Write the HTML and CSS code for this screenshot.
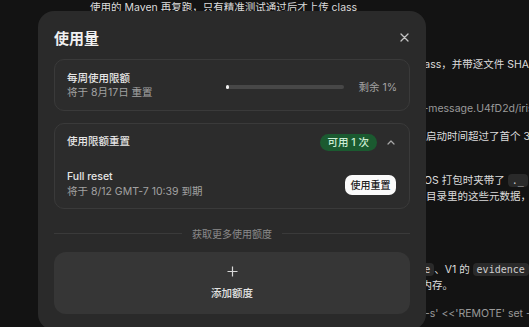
FILE: index.html
```html
<!DOCTYPE html>
<html lang="zh-CN">
<head>
    <meta charset="UTF-8">
    <meta name="viewport" content="width=device-width, initial-scale=1.0">
    <title>使用量</title>
    <link rel="stylesheet" href="styles.css">
</head>
<body>
    <div class="chat">
        <p>使用的 Maven 再复跑，只有精准测试通过后才上传 class</p>
        <p class="gap-l">只对本次改动涉及的 jar 重新编译并打包，精准测试全部通过后再上传 class，并带逐文件 SHA-256 校验</p>
        <p class="gap-m muted">把复跑时产生的全部测试结果和覆盖率数据统一归档，并写入到 commit-message.U4fD2d/iris.json 中</p>
        <p class="gap-s">第二次复跑依旧没有通过，原因是远端测试进程在首次冷启动阶段的整体启动时间超过了首个 30 秒窗口</p>
        <p class="gap-m">另外上传的 tarball 包里多出了一批无关的隐藏文件，原因是在本地 macOS 打包时夹带了 <code>._</code> 文件</p>
        <p>远端在解压之后会用校验脚本递归扫描整个上传包，并且逐个读取每个子目录里的这些元数据，导致校验失败</p>
        <p class="gap-xl">清理之后重新打包上传，再逐项对比远端基线镜像里对应的 <code>base-image</code>、V1 的 <code>evidence</code> 目录</p>
        <p>两边产物的哈希完全一致，问题只出在打包环节，修复后也不再占用 V2内存。</p>
        <p class="gap-s muted">随后在远端构建机器上执行同一套完整校验脚本：ssh build-host 'bash -s' &lt;&lt;'REMOTE' set -euo pipefail</p>
    </div>

    <div class="modal">
        <div class="modal-head">
            <h2>使用量</h2>
            <button class="close" aria-label="关闭">
                <svg width="9" height="9" viewBox="0 0 9 9"><path d="M1 1L8 8M8 1L1 8" stroke="currentColor" stroke-width="1.3" stroke-linecap="round"/></svg>
            </button>
        </div>

        <section class="card quota">
            <div class="quota-info">
                <div class="label">每周使用限额</div>
                <div class="sub">将于 8月17日 重置</div>
            </div>
            <div class="bar"><div class="fill" style="width: 1%"></div></div>
            <div class="remain">剩余 1%</div>
        </section>

        <section class="card reset">
            <div class="reset-head">
                <span class="label">使用限额重置</span>
                <span class="pill">可用 1 次</span>
                <svg class="chevron" width="8" height="5" viewBox="0 0 8 5"><path d="M1 4L4 1L7 4" fill="none" stroke="currentColor" stroke-width="1.2" stroke-linecap="round" stroke-linejoin="round"/></svg>
            </div>
            <div class="reset-item">
                <div>
                    <div class="label">Full reset</div>
                    <div class="sub">将于 8/12 GMT-7 10:39 到期</div>
                </div>
                <button class="use-btn">使用重置</button>
            </div>
        </section>

        <div class="divider"><span>获取更多使用额度</span></div>

        <button class="add-btn">
            <svg width="11" height="11" viewBox="0 0 11 11"><path d="M5.5 0.5V10.5M0.5 5.5H10.5" stroke="currentColor" stroke-width="1.2"/></svg>
            <span>添加额度</span>
        </button>
    </div>
</body>
</html>
```

FILE: styles.css
```css
* {
    box-sizing: border-box;
}

body {
    margin: 0;
    height: 327px;
    overflow: hidden;
    position: relative;
    background: #131313;
    font-family: Inter, "Noto Sans CJK SC", sans-serif;
    font-size: 11px;
    color: #dcdcdc;
}

/* chat text behind the dialog */
.chat {
    padding-left: 90px;
    white-space: nowrap;
    font-size: 10.5px;
}

.chat p {
    margin: 0;
    line-height: 16px;
}

.chat .gap-s { margin-top: 12px; }
.chat .gap-m { margin-top: 28px; }
.chat .gap-l { margin-top: 41px; }
.chat .gap-xl { margin-top: 57px; }

.chat .muted {
    color: #9a9a9a;
}

.chat code {
    font-family: "DejaVu Sans Mono", monospace;
    font-size: 10px;
    background: #2a2a2a;
    color: #cfcfcf;
    padding: 1px 4px;
    border-radius: 4px;
}

/* dialog */
.modal {
    position: absolute;
    left: 38px;
    top: 11px;
    width: 388px;
    padding: 16px;
    background: #2a2a2a;
    border-radius: 16px;
    font-size: 10.5px;
}

.modal-head {
    display: flex;
    justify-content: space-between;
    align-items: center;
    height: 20px;
    margin-bottom: 12px;
}

.modal-head h2 {
    margin: 0;
    font-size: 15px;
    font-weight: 600;
    color: #f0f0f0;
}

.close {
    background: none;
    border: none;
    padding: 0;
    margin-right: 1px;
    color: #c4c4c4;
    display: flex;
}

.card {
    border: 1px solid #3a3a3a;
    border-radius: 10px;
    background: #2c2c2c;
    margin-bottom: 12px;
}

.label {
    color: #e6e6e6;
    font-weight: 500;
    line-height: 14px;
}

.sub {
    color: #a2a2a2;
    line-height: 14px;
}

.quota {
    display: flex;
    align-items: center;
    padding: 12px 12px 10px 12px;
}

.quota-info {
    flex: 1;
}

.bar {
    width: 118px;
    height: 4px;
    border-radius: 2px;
    background: #474747;
    margin-top: 1px;
}

.fill {
    height: 100%;
    min-width: 3px;
    border-radius: 2px;
    background: #f2f2f2;
}

.remain {
    margin-left: 14px;
    color: #a3a3a3;
}

.reset {
    padding: 9px 13px 9px 12px;
}

.reset-head {
    display: flex;
    align-items: center;
    height: 18px;
}

.reset-head .label {
    flex: 1;
}

.pill {
    background: #1b5a30;
    color: #cdeed5;
    border-radius: 9px;
    padding: 0 8px;
    line-height: 17px;
    font-weight: 500;
}

.chevron {
    color: #a8a8a8;
    margin-left: 10px;
    margin-right: 1px;
}

.reset-item {
    display: flex;
    align-items: center;
    justify-content: space-between;
    margin-top: 19px;
}

.reset-item .sub {
    margin-top: 1px;
}

.use-btn {
    background: #fafafa;
    color: #1e1e1e;
    border: none;
    border-radius: 7px;
    font-family: inherit;
    font-size: 10px;
    font-weight: 500;
    height: 20px;
    width: 51px;
    padding: 0;
}

.divider {
    display: flex;
    align-items: center;
    gap: 10px;
    margin-top: 17px;
    height: 14px;
    color: #8a8a8a;
    font-size: 10px;
}

.divider::before,
.divider::after {
    content: "";
    flex: 1;
    height: 1px;
    background: #3a3a3a;
}

.add-btn {
    display: flex;
    flex-direction: column;
    align-items: center;
    justify-content: center;
    gap: 8px;
    width: 100%;
    height: 62px;
    margin-top: 12px;
    background: #363636;
    border: none;
    border-radius: 12px;
    color: #e4e4e4;
    font-family: inherit;
    font-size: 10.5px;
    font-weight: 500;
}

.add-btn svg {
    color: #d8d8d8;
}
```
